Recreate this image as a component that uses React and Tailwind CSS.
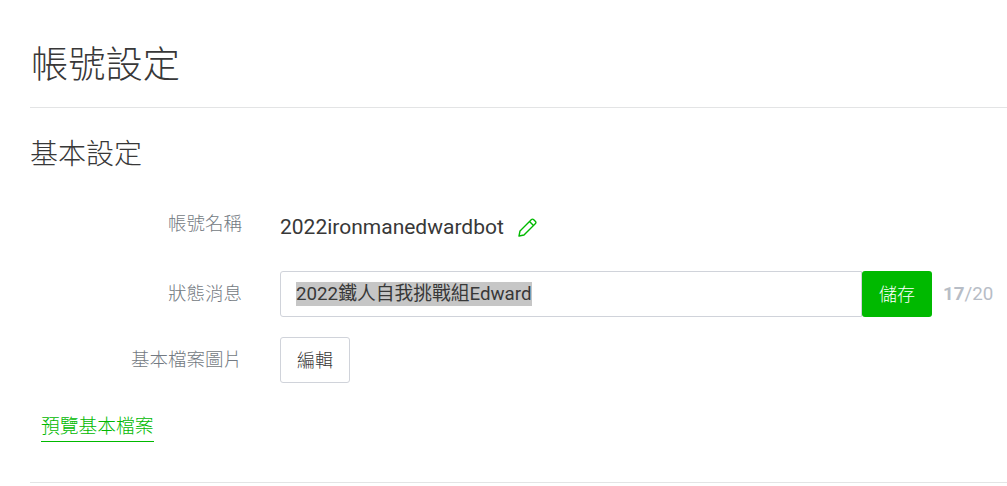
import React from 'react';

function Label({ children, className = '' }) {
  return <div className={`w-[212px] shrink-0 text-right text-[18.5px] leading-[26px] font-light text-[#737a82] ${className}`}>{children}</div>;
}

export default function App() {
  return (
    <div className="h-[486px] overflow-hidden bg-white pl-[30px] font-['Roboto','Noto_Sans_CJK_TC',sans-serif] text-[#383838]">
      <header className="h-[108px] border-b border-[#e3e4e5] pt-[40px]">
        <h1 className="pl-[1px] text-[37.25px] leading-[50px] font-light">帳號設定</h1>
      </header>

      <h2 className="mt-[27px] text-[28px] leading-[40px] font-light">基本設定</h2>

      <div className="mt-[30px] flex h-[46px] items-start">
        <Label className="mt-[6px]">帳號名稱</Label>
        <div className="mt-[9px] ml-[38px] flex h-[28px] items-center text-[21px]">
          <span>2022ironmanedwardbot</span>
          <svg className="-mt-[2px] ml-[13px]" width="21" height="21" viewBox="0 0 21 21" fill="none" stroke="#00b900" strokeWidth="1.4" strokeLinejoin="round">
            <path d="M2 19l1-5L14.5 2.5a1.4 1.4 0 0 1 2 0l2 2a1.4 1.4 0 0 1 0 2L7 18l-5 1z" />
            <path d="M12.5 4.5l4 4" />
          </svg>
        </div>
      </div>

      <div className="mt-[20px] flex h-[46px] items-center">
        <Label>狀態消息</Label>
        <div className="ml-[38px] flex h-[46px] w-[582px] items-center rounded-l-[3px] border border-[#d0d3da] pl-[15px] text-[18.75px]">
          <span className="bg-[#c6c6c6] leading-[24px]">2022鐵人自我挑戰組Edward</span>
        </div>
        <button className="h-[46px] w-[70px] rounded-[3px] bg-[#00b900] text-[18px] font-light text-white">儲存</button>
        <div className="ml-[11px] text-[18.75px] text-[#b7bdc6]"><b>17</b>/20</div>
      </div>

      <div className="mt-[20px] flex h-[46px] items-center">
        <Label className="mb-[1px]">基本檔案圖片</Label>
        <button className="ml-[38px] h-[46px] w-[70px] rounded-[3px] border border-[#d0d3da] text-[18px] font-light">編輯</button>
      </div>

      <div className="mt-[31px] ml-[11px] h-[28px] w-[113px] border-b border-[#00b900] text-[18.75px] leading-[26px] font-light whitespace-nowrap text-[#00b900]">預覽基本檔案</div>

      <div className="mt-[40px] border-b border-[#e3e4e5]" />
    </div>
  );
}
